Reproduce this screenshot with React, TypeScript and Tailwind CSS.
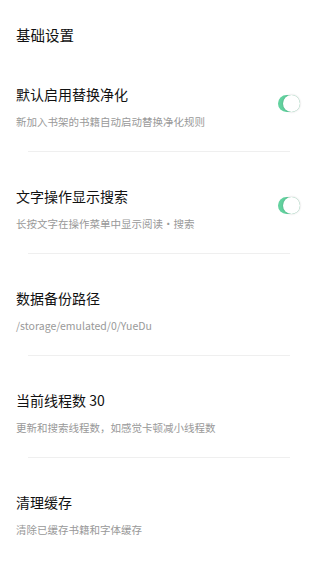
import React from 'react';

interface SettingItem {
  title: string;
  summary: string;
  toggle?: boolean;
}

const ITEMS: SettingItem[] = [
  { title: '默认启用替换净化', summary: '新加入书架的书籍自动启动替换净化规则', toggle: true },
  { title: '文字操作显示搜索', summary: '长按文字在操作菜单中显示阅读·搜索', toggle: true },
  { title: '数据备份路径', summary: '/storage/emulated/0/YueDu' },
  { title: '当前线程数 30', summary: '更新和搜索线程数，如感觉卡顿减小线程数' },
  { title: '清理缓存', summary: '清除已缓存书籍和字体缓存' },
];

function Toggle() {
  return (
    <div className="relative w-[22px] h-[17px] rounded-full bg-[#62d29f]">
      <div className="absolute right-0 top-0 w-[17px] h-[17px] rounded-full bg-white shadow-[0_0_2px_rgba(0,0,0,0.25)]" />
    </div>
  );
}

export default function App() {
  return (
    <div
      className="min-h-screen w-[320px] bg-white"
      style={{ fontFamily: '"Noto Sans CJK SC", "Noto Sans", sans-serif' }}
    >
      <div className="pt-[25px] pl-4">
        <h1 className="text-[14.5px] leading-5 text-[#111111]">基础设置</h1>
      </div>

      <div className="mt-[39px]">
        {ITEMS.map((item, i) => (
          <div key={item.title}>
            <div className="flex items-start pl-4 pr-5">
              <div className="flex-1">
                <div className="text-[14px] leading-5 text-[#111111]">{item.title}</div>
                <div className="mt-[11px] text-[10.5px] leading-[14px] text-[#999999]">{item.summary}</div>
              </div>
              {item.toggle && (
                <div className="mt-[11px]">
                  <Toggle />
                </div>
              )}
            </div>
            {i < ITEMS.length - 1 && (
              <div className="ml-[28px] mr-[30px] mt-[22px] mb-[34px] h-px bg-[#efefef]" />
            )}
          </div>
        ))}
      </div>
    </div>
  );
}
